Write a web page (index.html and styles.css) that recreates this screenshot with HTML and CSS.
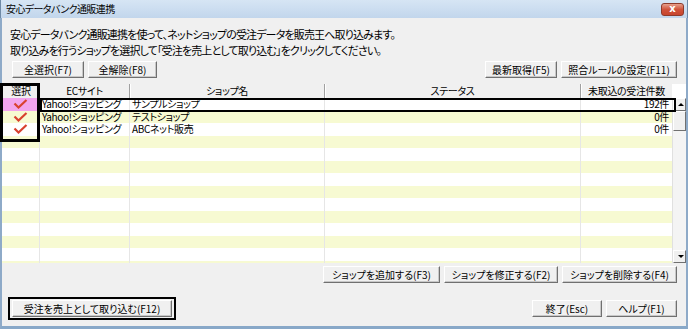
FILE: index.html
```html
<!DOCTYPE html>
<html lang="ja">
<head>
    <meta charset="UTF-8">
    <meta name="viewport" content="width=device-width, initial-scale=1.0">
    <title>安心データバンク通販連携</title>
    <link rel="stylesheet" href="styles.css">
</head>
<body>
    <div class="window">
        <div class="titlebar">
            <span class="title">安心データバンク通販連携</span>
            <span class="close">x</span>
        </div>
        <div class="intro">
            <p>安心データバンク通販連携を使って、ネットショップの受注データを販売王へ取り込みます。</p>
            <p>取り込みを行うショップを選択して「受注を売上として取り込む」をクリックしてください。</p>
        </div>
        <div class="toolbar">
            <div class="group">
                <button class="btn w72">全選択(F7)</button>
                <button class="btn w69">全解除(F8)</button>
            </div>
            <div class="group">
                <button class="btn w72">最新取得(F5)</button>
                <button class="btn w116">照合ルールの設定(F11)</button>
            </div>
        </div>

        <div class="gridbox">
            <div class="grid">
                <div class="row head">
                    <div class="cell c">選択</div>
                    <div class="cell c">ECサイト</div>
                    <div class="cell c">ショップ名</div>
                    <div class="cell c">ステータス</div>
                    <div class="cell c">未取込の受注件数</div>
                </div>
                <div class="rows" id="rows"></div>
            </div>
            <div class="scroll">
                <span class="arrow up"></span>
                <span class="thumb"></span>
                <span class="track"></span>
                <span class="arrow down"></span>
            </div>
            <div class="focus-col"></div>
            <div class="focus-row"></div>
        </div>

        <div class="actions">
            <button class="btn w117">ショップを追加する(F3)</button>
            <button class="btn w114">ショップを修正する(F2)</button>
            <button class="btn w115">ショップを削除する(F4)</button>
        </div>

        <div class="footer">
            <div class="default-box">
                <button class="btn w160">受注を売上として取り込む(F12)</button>
            </div>
            <div class="group">
                <button class="btn w70">終了(Esc)</button>
                <button class="btn w71">ヘルプ(F1)</button>
            </div>
        </div>
    </div>

    <script>
        const shops = [
            { site: 'Yahoo!ショッピング', name: 'サンプルショップ', count: '192件', first: true },
            { site: 'Yahoo!ショッピング', name: 'テストショップ', count: '0件' },
            { site: 'Yahoo!ショッピング', name: 'ABCネット販売', count: '0件' }
        ]
        const rows = document.querySelector('#rows')
        const check = '<svg width="15" height="10" viewBox="0 0 15 10"><path d="M1.5 4.5 L5.5 8.5 L13.5 1" fill="none" stroke="#d8412f" stroke-width="2.2"/></svg>'

        for (let i = 0; i < 14; i++) {
            const s = shops[i]
            const row = document.createElement('div')
            row.className = 'row' + (i % 2 ? ' alt' : '')
            if (s) {
                row.innerHTML = `
                    <div class="cell c sel${s.first ? ' pink' : ''}">${check}</div>
                    <div class="cell">${s.site}</div>
                    <div class="cell">${s.name}</div>
                    <div class="cell"></div>
                    <div class="cell r">${s.count}</div>`
            } else {
                row.innerHTML = '<div class="cell"></div>'.repeat(5)
            }
            rows.appendChild(row)
        }
    </script>
</body>
</html>
```

FILE: styles.css
```css
*{
    margin: 0;
    padding: 0;
    box-sizing: border-box;
}
html,body{
    width: 100%;
    height: 100%;
}
body{
    font-family: "Noto Sans CJK JP", "Liberation Sans", sans-serif;
    font-size: 11px;
    font-feature-settings: "palt";
    color: #000;
    background: #fff;
}
.window{
    width: 688px;
    height: 329px;
    display: flex;
    flex-direction: column;
    background: #f0f0f0;
    border: 2px solid #8eaac8;
    border-top: 0;
    border-bottom: 3px solid #88a8c8;
}
.titlebar{
    height: 18px;
    margin: 0 -2px;
    padding: 0 3px 0 5px;
    display: flex;
    justify-content: space-between;
    align-items: center;
    background: linear-gradient(#d6e5f4, #c2d6ec);
    border-left: 1px solid #6f8aa6;
    border-right: 1px solid #6f8aa6;
}
.title{
    font-size: 10px;
    letter-spacing: -0.6px;
    line-height: 18px;
}
.close{
    width: 23px;
    height: 13px;
    margin-top: 1px;
    border: 1px solid #8e3b2c;
    border-radius: 3px;
    background: linear-gradient(#e7a08c, #d0533b 50%, #c8452d);
    color: #fff;
    font-family: "DejaVu Sans", sans-serif;
    font-weight: bold;
    font-size: 10px;
    line-height: 10px;
    text-align: center;
}
.intro{
    padding: 8px 0 0 8px;
    line-height: 16px;
    letter-spacing: -0.85px;
}
.toolbar{
    margin-top: 3px;
    padding: 0 9px 0 10px;
    display: flex;
    justify-content: space-between;
}
.group{
    display: flex;
    gap: 4px;
}
.btn{
    height: 17px;
    font-family: inherit;
    font-size: 10px;
    font-feature-settings: "palt";
    background: #f0f0f0;
    border: 1px solid;
    border-color: #fff #707070 #707070 #fff;
    box-shadow: inset -1px -1px 0 #c8c8c8;
    color: #000;
    text-align: center;
}
.w69{ width: 69px; }
.w70{ width: 70px; }
.w71{ width: 71px; }
.w72{ width: 72px; }
.w114{ width: 114px; }
.w115{ width: 115px; }
.w116{ width: 116px; }
.w117{ width: 117px; }
.w160{ width: 160px; }

/* 一覧 */
.gridbox{
    position: relative;
    margin-top: 6px;
    height: 179px;
    display: flex;
    background: #fff;
}
.grid{
    flex: 1;
    overflow: hidden;
}
.row{
    display: grid;
    grid-template-columns: 38px 90px 195px 256px 1fr;
    height: 12.5px;
    line-height: 12.5px;
    background: #fff;
}
.row.alt{
    background: #f7fad2;
}
.row.head{
    height: 14px;
    line-height: 14px;
    background: #f0f0f0;
}
.head .cell{
    border-right: 1px solid #a0a0a0;
    box-shadow: 1px 0 0 #fff;
}
.head .cell:first-child{
    border-right: 0;
    box-shadow: none;
}
.rows{
    height: 165px;
    overflow: hidden;
}
.cell{
    padding: 0 2px;
    border-right: 1px solid #e6e6e6;
    white-space: nowrap;
    font-size: 10px;
    letter-spacing: -0.35px;
}
.cell:last-child{
    border-right: 0;
}
.c{ text-align: center; }
.r{ text-align: right; padding-right: 3px; }
.sel{
    display: flex;
    justify-content: center;
    align-items: center;
}
.pink{
    background: #f2a4ee;
}

/* スクロールバー */
.scroll{
    width: 14px;
    margin-top: 14px;
    display: flex;
    flex-direction: column;
    background: #f4f4f4;
    border-left: 1px solid #e0e0e0;
}
.arrow,.thumb{
    background: #f0f0f0;
    border: 1px solid;
    border-color: #fff #707070 #707070 #fff;
    position: relative;
}
.arrow{
    height: 13px;
}
.thumb{
    height: 20px;
}
.track{
    flex: 1;
}
.arrow::after{
    content: "";
    position: absolute;
    left: 4px;
    top: 4px;
    border-left: 3px solid transparent;
    border-right: 3px solid transparent;
}
.up::after{
    border-bottom: 3px solid #000;
}
.down::after{
    border-top: 3px solid #000;
}

/* フォーカス枠 */
.focus-col{
    position: absolute;
    left: -2px;
    top: -1px;
    width: 40px;
    height: 59px;
    border: 3px solid #000;
}
.focus-row{
    position: absolute;
    left: 38px;
    top: 14px;
    width: 636px;
    height: 14px;
    border: 2px solid #000;
}

.actions{
    margin-top: 3px;
    padding-right: 9px;
    display: flex;
    justify-content: flex-end;
    gap: 4px;
}
.footer{
    margin-top: 14px;
    padding: 0 9px 0 6px;
    display: flex;
    justify-content: space-between;
    align-items: center;
}
.default-box{
    padding: 1px 2px;
    border: 2px solid #000;
}
```
